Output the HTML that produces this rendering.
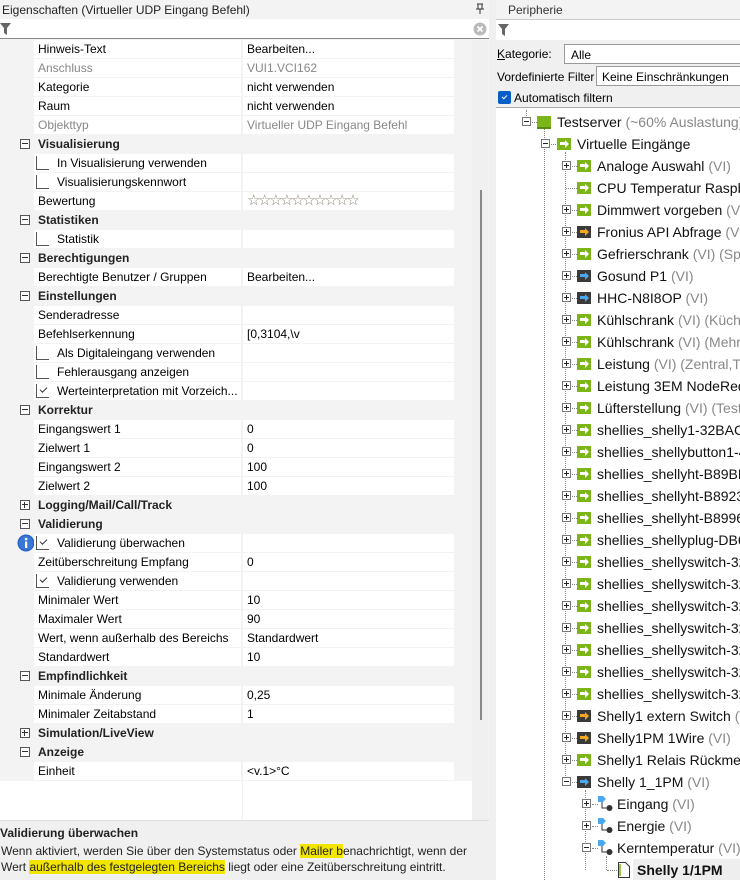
<!DOCTYPE html>
<html><head><meta charset="utf-8"><style>
*{box-sizing:border-box;margin:0;padding:0}
body{width:740px;height:880px;overflow:hidden;background:#f0f0f0;font-family:"Liberation Sans","DejaVu Sans",sans-serif;font-size:12px;color:#000;position:relative}
.a{position:absolute}
#L{left:0;top:0;width:489px;height:880px;background:#f3f3f3;overflow:hidden}
.ttl{font-size:12px;color:#222;white-space:nowrap}
.grid{position:absolute;left:0;top:40px;width:455px}
.r{position:relative;height:19px;white-space:nowrap}
.r .n{position:absolute;left:34px;top:0;width:207px;height:18px;background:#fff;padding-left:4px;line-height:18px}
.r .v{position:absolute;left:243px;top:0;width:211px;height:18px;background:#fff;padding-left:4px;line-height:18px}
.g{font-weight:bold;line-height:19px;padding-left:38px;color:#222}
.bx{position:absolute;left:20px;top:4px;width:10px;height:10px;border:1px solid #555;background:#fff}
.bx:before{content:"";position:absolute;left:1px;top:3px;width:6px;height:1px;background:#333}
.bx.p:after{content:"";position:absolute;left:3px;top:1px;width:1px;height:6px;background:#333}
.gr{color:#888}
.cb{display:inline-block;width:13px;height:14px;border:1px solid #555;border-top:none;border-right:none;background:#fff;vertical-align:-3px;margin-right:8px;margin-left:-2px;position:relative}
.cb.c:after{content:"";position:absolute;left:3px;top:3px;width:6px;height:3px;border-left:1px solid #333;border-bottom:1px solid #333;transform:rotate(-45deg)}
#R{left:496px;top:0;width:244px;height:880px;background:#fff;overflow:hidden}
.t{position:absolute;height:22px;line-height:22px;font-size:14px;white-space:nowrap;color:#111}
.t .s{color:#888}
.pb{position:absolute;width:9px;height:9px;border:1px solid #777;background:#fff}
.pb:before{content:"";position:absolute;left:1px;top:3px;width:5px;height:1px;background:#222}
.pb.p:after{content:"";position:absolute;left:3px;top:1px;width:1px;height:5px;background:#222}
.ic{position:absolute;width:14px;height:12px;background:#7cb518}
.ic:after{content:"";position:absolute;left:3px;top:4px;width:5px;height:3px;background:#fff}
.ic:before{content:"";position:absolute;left:8px;top:2px;border-left:4px solid #fff;border-top:4px solid transparent;border-bottom:4px solid transparent}
.ic.o{background:#3a3a3a}.ic.o:after{background:#f5a623}.ic.o:before{border-left-color:#f5a623}
.ic.b{background:#3a3a3a}.ic.b:after{background:#4aa8f0}.ic.b:before{border-left-color:#4aa8f0}
.dh{position:absolute;height:1px;border-top:1px dotted #888}
.dv{position:absolute;width:1px;border-left:1px dotted #888}
</style></head><body>
<div id="L" class="a">
 <div class="a ttl" style="left:2px;top:3px">Eigenschaften (Virtueller UDP Eingang Befehl)</div>
 <svg class="a" style="left:475px;top:3px" width="10" height="12"><path d="M2 1h6M3 1v5h4V1M1 6h8M5 6v5" stroke="#333" fill="none"/></svg>
 <div class="a" style="left:0;top:19px;width:489px;height:20px;background:#fff;border-bottom:1px solid #888"></div>
 <svg class="a" style="left:0;top:22px" width="12" height="14"><path d="M0 1h11l-4 5v7l-3-2v-5z" fill="#666"/></svg>
 <svg class="a" style="left:473px;top:22px" width="14" height="14"><circle cx="7" cy="7" r="6.5" fill="#bbb"/><path d="M4.5 4.5l5 5M9.5 4.5l-5 5" stroke="#fff" stroke-width="1.6"/></svg>
 <div class="grid">
  <div class="r"><div class="n">Hinweis-Text</div><div class="v">Bearbeiten...</div></div>
  <div class="r gr"><div class="n">Anschluss</div><div class="v">VUI1.VCI162</div></div>
  <div class="r"><div class="n">Kategorie</div><div class="v">nicht verwenden</div></div>
  <div class="r"><div class="n">Raum</div><div class="v">nicht verwenden</div></div>
  <div class="r gr"><div class="n">Objekttyp</div><div class="v">Virtueller UDP Eingang Befehl</div></div>
  <div class="r g"><span class="bx"></span>Visualisierung</div>
  <div class="r"><div class="n"><span class="cb"></span>In Visualisierung verwenden</div><div class="v"></div></div>
  <div class="r"><div class="n"><span class="cb"></span>Visualisierungskennwort</div><div class="v"></div></div>
  <div class="r"><div class="n">Bewertung</div><div class="v" style="color:#8a8070;font-size:15px;letter-spacing:-2.4px;line-height:17px">☆☆☆☆☆☆☆☆☆☆</div></div>
  <div class="r g"><span class="bx"></span>Statistiken</div>
  <div class="r"><div class="n"><span class="cb"></span>Statistik</div><div class="v"></div></div>
  <div class="r g"><span class="bx"></span>Berechtigungen</div>
  <div class="r"><div class="n">Berechtigte Benutzer / Gruppen</div><div class="v">Bearbeiten...</div></div>
  <div class="r g"><span class="bx"></span>Einstellungen</div>
  <div class="r"><div class="n">Senderadresse</div><div class="v"></div></div>
  <div class="r"><div class="n">Befehlserkennung</div><div class="v">[0,3104,\v</div></div>
  <div class="r"><div class="n"><span class="cb"></span>Als Digitaleingang verwenden</div><div class="v"></div></div>
  <div class="r"><div class="n"><span class="cb"></span>Fehlerausgang anzeigen</div><div class="v"></div></div>
  <div class="r"><div class="n"><span class="cb c"></span>Werteinterpretation mit Vorzeich...</div><div class="v"></div></div>
  <div class="r g"><span class="bx"></span>Korrektur</div>
  <div class="r"><div class="n">Eingangswert 1</div><div class="v">0</div></div>
  <div class="r"><div class="n">Zielwert 1</div><div class="v">0</div></div>
  <div class="r"><div class="n">Eingangswert 2</div><div class="v">100</div></div>
  <div class="r"><div class="n">Zielwert 2</div><div class="v">100</div></div>
  <div class="r g"><span class="bx p"></span>Logging/Mail/Call/Track</div>
  <div class="r g"><span class="bx"></span>Validierung</div>
  <div class="r"><svg class="a" style="left:17px;top:0" width="18" height="18"><circle cx="9" cy="9" r="8.5" fill="#2a62c9"/><circle cx="9" cy="9" r="7" fill="#3a78d8"/><rect x="8" y="7.5" width="2.2" height="6.5" fill="#fff"/><circle cx="9.1" cy="5" r="1.3" fill="#fff"/></svg><div class="n"><span class="cb c"></span>Validierung überwachen</div><div class="v"></div></div>
  <div class="r"><div class="n">Zeitüberschreitung Empfang</div><div class="v">0</div></div>
  <div class="r"><div class="n"><span class="cb c"></span>Validierung verwenden</div><div class="v"></div></div>
  <div class="r"><div class="n">Minimaler Wert</div><div class="v">10</div></div>
  <div class="r"><div class="n">Maximaler Wert</div><div class="v">90</div></div>
  <div class="r"><div class="n">Wert, wenn außerhalb des Bereichs</div><div class="v">Standardwert</div></div>
  <div class="r"><div class="n">Standardwert</div><div class="v">10</div></div>
  <div class="r g"><span class="bx"></span>Empfindlichkeit</div>
  <div class="r"><div class="n">Minimale Änderung</div><div class="v">0,25</div></div>
  <div class="r"><div class="n">Minimaler Zeitabstand</div><div class="v">1</div></div>
  <div class="r g"><span class="bx p"></span>Simulation/LiveView</div>
  <div class="r g"><span class="bx"></span>Anzeige</div>
  <div class="r"><div class="n">Einheit</div><div class="v">&lt;v.1&gt;°C</div></div>
 </div>
 <div class="a" style="left:0;top:781px;width:473px;height:39px;background:#fff"></div>
 <div class="a" style="left:242px;top:781px;width:1px;height:39px;background:#f0f0f0"></div>
 <div class="a" style="left:472px;top:40px;width:16px;height:780px;background:#f0f0f0"></div>
 <div class="a" style="left:480px;top:190px;width:2px;height:530px;background:#888"></div>
 <div class="a" style="left:0;top:820px;width:489px;height:60px;background:#f0f0f0;border-top:1px solid #ddd"></div>
 <div class="a" style="left:0;top:826px;font-weight:bold;color:#222">Validierung überwachen</div>
 <div class="a" style="left:1px;top:843px;line-height:16px;color:#222;white-space:nowrap">Wenn aktiviert, werden Sie über den Systemstatus oder <span style="background:#f2e600">Mailer b</span>enachrichtigt, wenn der<br>Wert <span style="background:#f2e600">außerhalb des festgelegten Bereichs</span> liegt oder eine Zeitüberschreitung eintritt.</div>
</div>
<div class="a" style="left:489px;top:0;width:7px;height:880px;background:#f0f0f0"></div>
<div id="R" class="a">
 <div class="a" style="left:0;top:0;width:244px;height:19px;background:#f3f3f3"></div>
 <div class="a ttl" style="left:12px;top:3px;color:#333">Peripherie</div>
 <div class="a" style="left:0;top:19px;width:244px;height:1px;background:#ccc"></div>
 <svg class="a" style="left:2px;top:23px" width="12" height="14"><path d="M0 1h11l-4 5v7l-3-2v-5z" fill="#666"/></svg>
 <div class="a" style="left:0;top:40px;width:244px;height:68px;background:#f0f0f0"></div>
 <div class="a" style="left:1px;top:47px"><u>K</u>ategorie:</div>
 <div class="a" style="left:68px;top:44px;width:180px;height:20px;border:1px solid #999;background:#fff;padding:3px 6px">Alle</div>
 <div class="a" style="left:1px;top:70px">Vordefinierte Filter</div>
 <div class="a" style="left:100px;top:66px;width:150px;height:20px;border:1px solid #999;background:#fff;padding:3px 5px;white-space:nowrap">Keine Einschränkungen</div>
 <div class="a" style="left:2px;top:91px;width:13px;height:13px;background:#0a5fc7;border-radius:2px"></div>
 <div class="a" style="left:6px;top:93px;width:5px;height:3px;border-left:1px solid #fff;border-bottom:1px solid #fff;transform:rotate(-45deg);margin-top:2px"></div>
 <div class="a" style="left:18px;top:91px">Automatisch filtern</div>
 <div class="a" style="left:0;top:107px;width:244px;height:1px;background:#aaa"></div>

 <div class="dv" style="left:30px;top:110px;height:8px"></div>
 <div class="dv" style="left:48px;top:126px;height:760px"></div>
 <div class="dv" style="left:69px;top:152px;height:630px"></div>
 <div class="dv" style="left:89px;top:790px;height:80px"></div>
 <div class="dv" style="left:110px;top:856px;height:14px"></div>

 <div class="pb" style="left:26px;top:117px"></div><div class="dh" style="left:36px;top:122px;width:5px"></div><div class="a" style="left:41px;top:116px;width:14px;height:13px;background:#7cb518;border-bottom:2px solid #5a8a10"></div>
 <div class="t" style="left:61px;top:111px">Testserver <span class="s">(~60% Auslastung)</span></div>
 <div class="pb" style="left:45px;top:139px"></div><div class="dh" style="left:55px;top:144px;width:5px"></div><div class="ic" style="left:61px;top:138px"></div>
 <div class="t" style="left:81px;top:133px">Virtuelle Eingänge</div>

 <div class="pb p" style="left:66px;top:161px"></div><div class="dh" style="left:76px;top:166px;width:5px"></div><div class="ic" style="left:81px;top:160px"></div><div class="t" style="left:101px;top:155px">Analoge Auswahl <span class="s">(VI)</span></div>
 <div class="dh" style="left:70px;top:188px;width:11px"></div><div class="ic" style="left:81px;top:182px"></div><div class="t" style="left:101px;top:177px">CPU Temperatur Raspberry</div>
 <div class="pb p" style="left:66px;top:205px"></div><div class="dh" style="left:76px;top:210px;width:5px"></div><div class="ic" style="left:81px;top:204px"></div><div class="t" style="left:101px;top:199px">Dimmwert vorgeben <span class="s">(VI)</span></div>
 <div class="pb p" style="left:66px;top:227px"></div><div class="dh" style="left:76px;top:232px;width:5px"></div><div class="ic o" style="left:81px;top:226px"></div><div class="t" style="left:101px;top:221px">Fronius API Abfrage <span class="s">(VI)</span></div>
 <div class="pb p" style="left:66px;top:249px"></div><div class="dh" style="left:76px;top:254px;width:5px"></div><div class="ic" style="left:81px;top:248px"></div><div class="t" style="left:101px;top:243px">Gefrierschrank <span class="s">(VI) (Speicher)</span></div>
 <div class="pb p" style="left:66px;top:271px"></div><div class="dh" style="left:76px;top:276px;width:5px"></div><div class="ic b" style="left:81px;top:270px"></div><div class="t" style="left:101px;top:265px">Gosund P1 <span class="s">(VI)</span></div>
 <div class="pb p" style="left:66px;top:293px"></div><div class="dh" style="left:76px;top:298px;width:5px"></div><div class="ic b" style="left:81px;top:292px"></div><div class="t" style="left:101px;top:287px">HHC-N8I8OP <span class="s">(VI)</span></div>
 <div class="pb p" style="left:66px;top:315px"></div><div class="dh" style="left:76px;top:320px;width:5px"></div><div class="ic" style="left:81px;top:314px"></div><div class="t" style="left:101px;top:309px">Kühlschrank <span class="s">(VI) (Küche)</span></div>
 <div class="pb p" style="left:66px;top:337px"></div><div class="dh" style="left:76px;top:342px;width:5px"></div><div class="ic" style="left:81px;top:336px"></div><div class="t" style="left:101px;top:331px">Kühlschrank <span class="s">(VI) (Mehrzweck)</span></div>
 <div class="pb p" style="left:66px;top:359px"></div><div class="dh" style="left:76px;top:364px;width:5px"></div><div class="ic" style="left:81px;top:358px"></div><div class="t" style="left:101px;top:353px">Leistung <span class="s">(VI) (Zentral,Test)</span></div>
 <div class="pb p" style="left:66px;top:381px"></div><div class="dh" style="left:76px;top:386px;width:5px"></div><div class="ic" style="left:81px;top:380px"></div><div class="t" style="left:101px;top:375px">Leistung 3EM NodeRed</div>
 <div class="pb p" style="left:66px;top:403px"></div><div class="dh" style="left:76px;top:408px;width:5px"></div><div class="ic" style="left:81px;top:402px"></div><div class="t" style="left:101px;top:397px">Lüfterstellung <span class="s">(VI) (Test,</span></div>
 <div class="pb p" style="left:66px;top:425px"></div><div class="dh" style="left:76px;top:430px;width:5px"></div><div class="ic" style="left:81px;top:424px"></div><div class="t" style="left:101px;top:419px">shellies_shelly1-32BAC0</div>
 <div class="pb p" style="left:66px;top:447px"></div><div class="dh" style="left:76px;top:452px;width:5px"></div><div class="ic" style="left:81px;top:446px"></div><div class="t" style="left:101px;top:441px">shellies_shellybutton1-4</div>
 <div class="pb p" style="left:66px;top:469px"></div><div class="dh" style="left:76px;top:474px;width:5px"></div><div class="ic" style="left:81px;top:468px"></div><div class="t" style="left:101px;top:463px">shellies_shellyht-B89BD</div>
 <div class="pb p" style="left:66px;top:491px"></div><div class="dh" style="left:76px;top:496px;width:5px"></div><div class="ic" style="left:81px;top:490px"></div><div class="t" style="left:101px;top:485px">shellies_shellyht-B8923</div>
 <div class="pb p" style="left:66px;top:513px"></div><div class="dh" style="left:76px;top:518px;width:5px"></div><div class="ic" style="left:81px;top:512px"></div><div class="t" style="left:101px;top:507px">shellies_shellyht-B8996</div>
 <div class="pb p" style="left:66px;top:535px"></div><div class="dh" style="left:76px;top:540px;width:5px"></div><div class="ic" style="left:81px;top:534px"></div><div class="t" style="left:101px;top:529px">shellies_shellyplug-DB6</div>
 <div class="pb p" style="left:66px;top:557px"></div><div class="dh" style="left:76px;top:562px;width:5px"></div><div class="ic" style="left:81px;top:556px"></div><div class="t" style="left:101px;top:551px">shellies_shellyswitch-32</div>
 <div class="pb p" style="left:66px;top:579px"></div><div class="dh" style="left:76px;top:584px;width:5px"></div><div class="ic" style="left:81px;top:578px"></div><div class="t" style="left:101px;top:573px">shellies_shellyswitch-32</div>
 <div class="pb p" style="left:66px;top:601px"></div><div class="dh" style="left:76px;top:606px;width:5px"></div><div class="ic" style="left:81px;top:600px"></div><div class="t" style="left:101px;top:595px">shellies_shellyswitch-32</div>
 <div class="pb p" style="left:66px;top:623px"></div><div class="dh" style="left:76px;top:628px;width:5px"></div><div class="ic" style="left:81px;top:622px"></div><div class="t" style="left:101px;top:617px">shellies_shellyswitch-32</div>
 <div class="pb p" style="left:66px;top:645px"></div><div class="dh" style="left:76px;top:650px;width:5px"></div><div class="ic" style="left:81px;top:644px"></div><div class="t" style="left:101px;top:639px">shellies_shellyswitch-32</div>
 <div class="pb p" style="left:66px;top:667px"></div><div class="dh" style="left:76px;top:672px;width:5px"></div><div class="ic" style="left:81px;top:666px"></div><div class="t" style="left:101px;top:661px">shellies_shellyswitch-32</div>
 <div class="pb p" style="left:66px;top:689px"></div><div class="dh" style="left:76px;top:694px;width:5px"></div><div class="ic" style="left:81px;top:688px"></div><div class="t" style="left:101px;top:683px">shellies_shellyswitch-32</div>
 <div class="pb p" style="left:66px;top:711px"></div><div class="dh" style="left:76px;top:716px;width:5px"></div><div class="ic o" style="left:81px;top:710px"></div><div class="t" style="left:101px;top:705px">Shelly1 extern Switch <span class="s">(VI)</span></div>
 <div class="pb p" style="left:66px;top:733px"></div><div class="dh" style="left:76px;top:738px;width:5px"></div><div class="ic o" style="left:81px;top:732px"></div><div class="t" style="left:101px;top:727px">Shelly1PM 1Wire <span class="s">(VI)</span></div>
 <div class="pb p" style="left:66px;top:755px"></div><div class="dh" style="left:76px;top:760px;width:5px"></div><div class="ic" style="left:81px;top:754px"></div><div class="t" style="left:101px;top:749px">Shelly1 Relais Rückmeldung</div>
 <div class="pb" style="left:66px;top:777px"></div><div class="dh" style="left:76px;top:782px;width:5px"></div><div class="ic b" style="left:81px;top:776px"></div><div class="t" style="left:101px;top:771px">Shelly 1_1PM <span class="s">(VI)</span></div>

 <div class="pb p" style="left:86px;top:799px"></div><div class="dh" style="left:96px;top:804px;width:6px"></div>
 <svg class="a" style="left:102px;top:796px" width="16" height="16"><path d="M0 0h5l3 3-3 3H0z" fill="#4aa8f0"/><path d="M4 6v6h6" stroke="#333" fill="none"/><circle cx="11.5" cy="12" r="3" fill="#333"/></svg>
 <div class="t" style="left:121px;top:793px">Eingang <span class="s">(VI)</span></div>
 <div class="pb p" style="left:86px;top:821px"></div><div class="dh" style="left:96px;top:826px;width:6px"></div>
 <svg class="a" style="left:102px;top:818px" width="16" height="16"><path d="M0 0h5l3 3-3 3H0z" fill="#4aa8f0"/><path d="M4 6v6h6" stroke="#333" fill="none"/><circle cx="11.5" cy="12" r="3" fill="#333"/></svg>
 <div class="t" style="left:121px;top:815px">Energie <span class="s">(VI)</span></div>
 <div class="pb" style="left:86px;top:843px"></div><div class="dh" style="left:96px;top:848px;width:6px"></div>
 <svg class="a" style="left:102px;top:840px" width="16" height="16"><path d="M0 0h5l3 3-3 3H0z" fill="#4aa8f0"/><path d="M4 6v6h6" stroke="#333" fill="none"/><circle cx="11.5" cy="12" r="3" fill="#333"/></svg>
 <div class="t" style="left:121px;top:837px">Kerntemperatur <span class="s">(VI)</span></div>
 <div class="dh" style="left:111px;top:870px;width:10px"></div>
 <svg class="a" style="left:122px;top:862px" width="12" height="16"><path d="M0.5 0.5h7l4 4v11H0.5z" fill="#fff" stroke="#333"/><path d="M2 2v12" stroke="#7cb518" stroke-width="1.5"/></svg>
 <div class="a" style="left:137px;top:859px;width:107px;height:22px;background:#eee"></div>
 <div class="t" style="left:141px;top:859px;font-weight:bold">Shelly 1/1PM</div>
</div>
</body></html>
